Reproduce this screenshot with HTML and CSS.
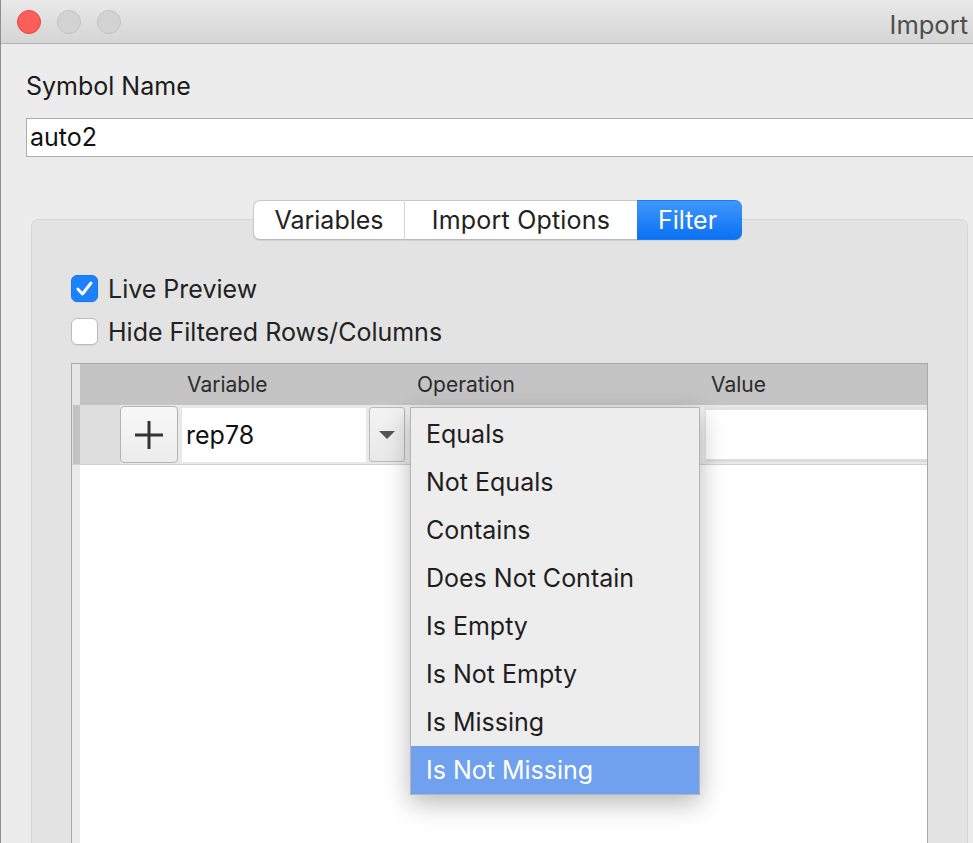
FILE: index.html
```html
<!DOCTYPE html>
<html>
<head>
<meta charset="utf-8">
<title>Import</title>
<link rel="stylesheet" href="styles.css">
</head>
<body>
<div class="window">
  <div class="titlebar">
    <div class="lights">
      <span class="light close"></span>
      <span class="light"></span>
      <span class="light"></span>
    </div>
    <div class="title">Import</div>
  </div>
  <div class="content">
    <div class="label">Symbol Name</div>
    <div class="textfield">auto2</div>
    <div class="tabwidget">
      <div class="tabs">
        <div class="seg seg-var">Variables</div>
        <div class="seg seg-opt">Import Options</div>
        <div class="seg seg-filter active">Filter</div>
      </div>
      <div class="panel">
        <div class="check-row">
          <span class="checkbox checked">
            <svg width="27" height="27" viewBox="0 0 27 27"><path d="M7 14.2 L11.5 19 L20 8" fill="none" stroke="#fff" stroke-width="3" stroke-linecap="round" stroke-linejoin="round"/></svg>
          </span>
          <span class="check-label">Live Preview</span>
        </div>
        <div class="check-row second">
          <span class="checkbox"></span>
          <span class="check-label">Hide Filtered Rows/Columns</span>
        </div>
        <div class="table">
          <div class="thead">
            <div class="corner"></div>
            <div class="th th-var">Variable</div>
            <div class="th th-op">Operation</div>
            <div class="th th-val">Value</div>
          </div>
          <div class="trow">
            <div class="rowhead"></div>
            <div class="rowpad"></div>
            <div class="addbtn">
              <svg width="32" height="32" viewBox="0 0 32 32"><path d="M2 16 H30 M16 2 V30" stroke="#333" stroke-width="3"/></svg>
            </div>
            <div class="varfield">rep78</div>
            <div class="combo-btn">
              <svg width="16" height="8" viewBox="0 0 16 8"><path d="M0 0 H16 L8 8 Z" fill="#555"/></svg>
            </div>
            <div class="opcell"></div>
            <div class="valcell"></div>
          </div>
          <div class="tbody">
            <div class="bodystrip"></div>
            <div class="bodyfill"></div>
          </div>
          <div class="menu">
            <div class="item">Equals</div>
            <div class="item">Not Equals</div>
            <div class="item">Contains</div>
            <div class="item">Does Not Contain</div>
            <div class="item">Is Empty</div>
            <div class="item">Is Not Empty</div>
            <div class="item">Is Missing</div>
            <div class="item selected">Is Not Missing</div>
          </div>
        </div>
      </div>
    </div>
  </div>
</div>
</body>
</html>
```

FILE: styles.css
```css
html, body {
  margin: 0;
  padding: 0;
  overflow: hidden;
  background: #ececec;
}

body {
  font-family: Inter, "Noto Sans", sans-serif;
  color: #1c1c1c;
}

.window {
  width: 973px;
  height: 843px;
  box-sizing: border-box;
  border-left: 1px solid #8f8f8f;
  background: #ececec;
  overflow: hidden;
}

.titlebar {
  height: 43px;
  border-bottom: 1px solid #b4b4b4;
  background: linear-gradient(#e9e9e9, #d5d5d5);
  display: flex;
  align-items: center;
}

.lights {
  display: flex;
  gap: 16px;
  padding-left: 16px;
}

.light {
  width: 24px;
  height: 24px;
  box-sizing: border-box;
  border-radius: 50%;
  background: #d3d3d3;
  border: 1px solid #c2c2c2;
}

.light.close {
  background: #fc5f57;
  border-color: #e2463f;
}

.title {
  margin-left: auto;
  padding-right: 5px;
  padding-top: 6px;
  font-size: 25.5px;
  color: #4d4d4d;
}

.content {
  padding-left: 25px;
}

.label {
  margin-top: 27px;
  font-size: 25px;
  line-height: 30px;
  color: #1a1a1a;
}

.textfield {
  margin-top: 17px;
  height: 39px;
  box-sizing: border-box;
  border: 1px solid #adadad;
  border-right: none;
  background: #fff;
  padding-left: 3px;
  font-size: 25px;
  line-height: 37px;
  color: #111;
}

.tabwidget {
  margin-top: 43px;
  margin-left: 5px;
  margin-right: 5px;
}

.tabs {
  display: flex;
  justify-content: center;
  padding-right: 4px;
  position: relative;
  z-index: 1;
}

.seg {
  height: 40px;
  box-sizing: border-box;
  border-top: 1px solid #c9c9c9;
  border-bottom: 1px solid #b9b9b9;
  background: #fff;
  font-size: 25px;
  line-height: 38px;
  text-align: center;
  color: #222;
  box-shadow: 0 1px 1px rgba(0, 0, 0, 0.08);
}

.seg-var {
  width: 152px;
  border-left: 1px solid #c9c9c9;
  border-right: 1px solid #d8d8d8;
  border-radius: 7px 0 0 7px;
}

.seg-opt {
  width: 232px;
  letter-spacing: 0.2px;
}

.seg-filter {
  width: 105px;
  border-radius: 0 7px 7px 0;
}

.seg.active {
  background: linear-gradient(#3f97fb, #0a70f4);
  border-color: #1f7cf0;
  color: #fff;
  padding-right: 4px;
}

.panel {
  margin-top: -21px;
  background: #e3e3e3;
  border: 1px solid #d6d6d6;
  border-radius: 7px;
  padding: 54px 39px 0 39px;
  height: 700px;
}

.check-row {
  display: flex;
  align-items: center;
  gap: 10px;
  height: 28px;
}

.check-row.second {
  margin-top: 15px;
}

.checkbox {
  width: 27px;
  height: 27px;
  box-sizing: border-box;
  border-radius: 6px;
  background: #fff;
  border: 1px solid #bcbcbc;
  box-shadow: 0 1px 1px rgba(0, 0, 0, 0.06);
  display: flex;
}

.checkbox.checked {
  background: #1b82fb;
  border-color: #1a78ee;
}

.checkbox svg {
  margin: -1px;
}

.check-label {
  font-size: 25px;
  line-height: 28px;
  padding-top: 2px;
  color: #222;
}

.table {
  margin-top: 18px;
  position: relative;
  border: 1px solid #a9a9a9;
  border-bottom: none;
  background: #fff;
  height: 600px;
}

.thead {
  display: flex;
  height: 41px;
  background: #c4c4c4;
}

.corner {
  width: 8px;
  background: #e6e6e6;
}

.th {
  font-size: 21px;
  line-height: 41px;
  color: #2c2c2c;
  box-sizing: border-box;
}

.th-var {
  width: 325px;
  padding-left: 107px;
}

.th-op {
  width: 295px;
  padding-left: 12px;
}

.th-val {
  padding-left: 11px;
}

.trow {
  display: flex;
  align-items: center;
  height: 59px;
  border-bottom: 1px solid #d2d2d2;
  background: #e9e9e9;
}

.rowhead {
  width: 8px;
  align-self: stretch;
  background: #c2c2c2;
  border-left: 1px solid #e2e2e2;
  box-sizing: border-box;
}

.rowpad {
  width: 40px;
  align-self: stretch;
  background: #dedede;
}

.addbtn {
  width: 58px;
  height: 57px;
  box-sizing: border-box;
  border: 1px solid #b3b3b3;
  border-radius: 4px;
  background: linear-gradient(#f8f8f8, #ececec);
  display: flex;
  align-items: center;
  justify-content: center;
}

.varfield {
  margin-left: 4px;
  width: 184px;
  height: 54px;
  box-sizing: border-box;
  background: #fff;
  padding-left: 4px;
  font-size: 25px;
  line-height: 54px;
  color: #111;
}

.combo-btn {
  margin-left: 3px;
  width: 36px;
  height: 55px;
  box-sizing: border-box;
  border: 1px solid #bababa;
  border-radius: 3px;
  background: linear-gradient(#f3f3f3, #e8e8e8);
  display: flex;
  align-items: center;
  justify-content: center;
}

.opcell {
  margin-left: 1px;
  width: 298px;
  height: 55px;
  background: #f0f0f0;
}

.valcell {
  margin-left: 2px;
  flex: 1;
  height: 55px;
  box-sizing: border-box;
  border-top: 3px solid #e2e2e2;
  border-bottom: 3px solid #dcdcdc;
  background: #fff;
}

.tbody {
  display: flex;
  height: 500px;
}

.bodystrip {
  width: 8px;
  background: #ebebeb;
}

.bodyfill {
  flex: 1;
  background: #fff;
}

.menu {
  position: absolute;
  left: 338px;
  top: 43px;
  width: 290px;
  box-sizing: border-box;
  padding-top: 2px;
  background: #ededed;
  border: 1px solid #b5b5b5;
  box-shadow: 0 8px 24px rgba(0, 0, 0, 0.28);
}

.item {
  height: 48px;
  line-height: 48px;
  padding-left: 15px;
  font-size: 25px;
  color: #1e1e1e;
}

.item.selected {
  background: #70a1ef;
  color: #fff;
}
```
